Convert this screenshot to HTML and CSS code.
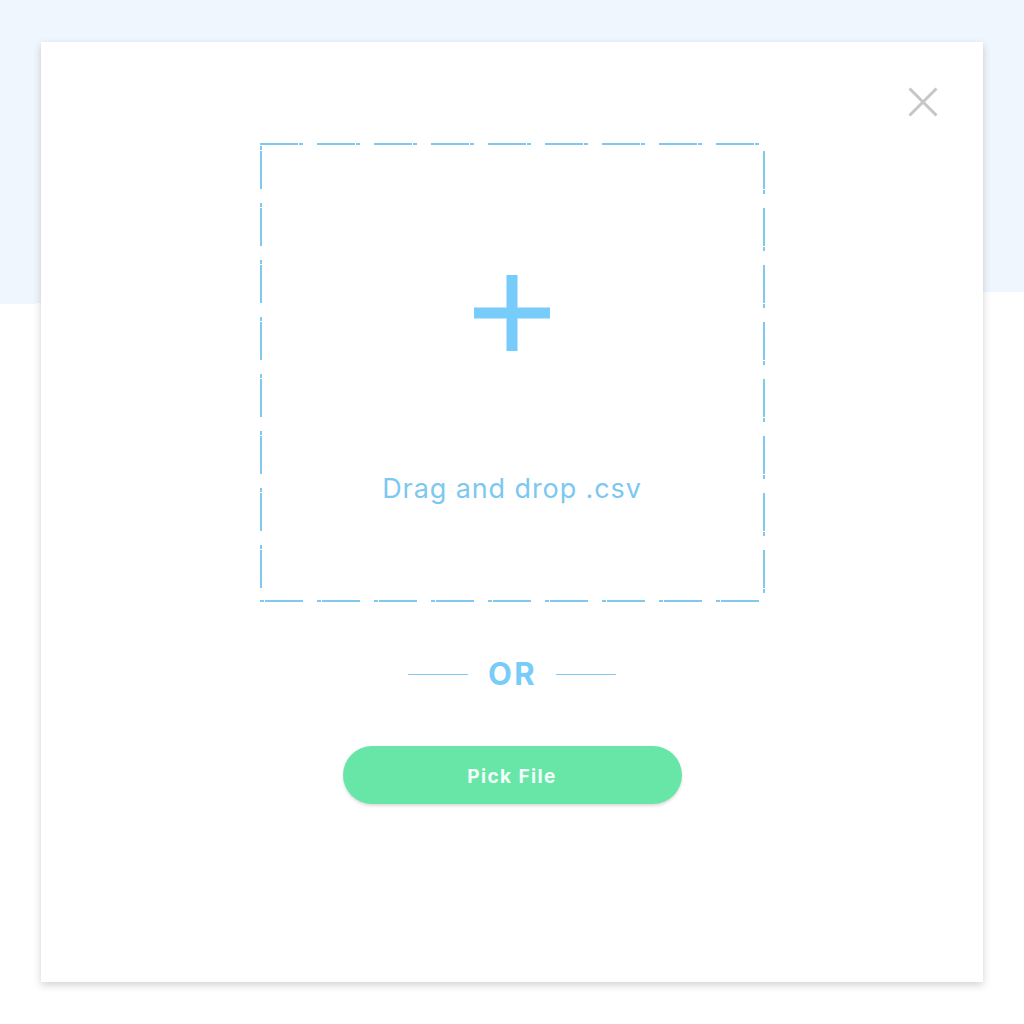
FILE: index.html
```html
<!DOCTYPE html>
<html lang="en">
<head>
<meta charset="utf-8">
<title>Upload CSV</title>
<link rel="stylesheet" href="styles.css">
</head>
<body>
<div class="card">
  <button class="close" aria-label="Close">
    <svg width="30" height="30" viewBox="0 0 30 30"><path d="M1.5 1.5 L28.5 28.5 M28.5 1.5 L1.5 28.5" stroke="#c6c6c6" stroke-width="3" fill="none"/></svg>
  </button>
  <div class="dropzone">
    <svg class="plus" width="76" height="76" viewBox="0 0 76 76"><rect x="32.5" y="0" width="11" height="76" fill="#77ccfa"/><rect x="0" y="32.5" width="76" height="11" fill="#77ccfa"/></svg>
    <div class="drop-text">Drag and drop .csv</div>
  </div>
  <div class="or-row">
    <span class="or-line"></span>
    <span class="or-text">OR</span>
    <span class="or-line"></span>
  </div>
  <button class="pick">Pick File</button>
</div>
</body>
</html>
```

FILE: styles.css
```css
html {
  background: linear-gradient(179.33deg, #f0f6fe 303.9px, #ffffff 303.9px) no-repeat;
  background-color: #fff;
}
body {
  margin: 0;
  padding: 42px 0 42px 41px;
  font-family: Inter, Lato, sans-serif;
}
.card {
  position: relative;
  box-sizing: border-box;
  width: 942px;
  height: 940px;
  background: #fff;
  box-shadow: 0 3px 8px rgba(0, 0, 0, 0.18);
  display: flex;
  flex-direction: column;
  align-items: center;
}
.close {
  position: absolute;
  top: 45px;
  right: 45px;
  width: 30px;
  height: 30px;
  padding: 0;
  border: 0;
  background: none;
  cursor: pointer;
}
.close svg { display: block; }
.dropzone {
  box-sizing: border-box;
  width: 505px;
  height: 459px;
  margin-top: 101px;
  padding-top: 132px;
  display: flex;
  flex-direction: column;
  align-items: center;
  background:
    repeating-linear-gradient(90deg, #80c8ee 0 38px, transparent 38px 39px, #80c8ee 39px 43px, transparent 43px 57px) left top / 100% 2px no-repeat,
    repeating-linear-gradient(90deg, #80c8ee 0 4px, transparent 4px 5px, #80c8ee 5px 43px, transparent 43px 57px) left bottom / 100% 2px no-repeat,
    repeating-linear-gradient(180deg, transparent 0 3px, #80c8ee 3px 7px, transparent 7px 8px, #80c8ee 8px 46px, transparent 46px 57px) left top / 2px 100% no-repeat,
    repeating-linear-gradient(180deg, transparent 0 8px, #80c8ee 8px 46px, transparent 46px 47px, #80c8ee 47px 51px, transparent 51px 57px) right top / 2px 100% no-repeat;
}
.plus { display: block; }
.drop-text {
  margin-top: 122px;
  font-size: 27px;
  line-height: 32px;
  color: #7cc8f0;
  letter-spacing: 0.9px;
}
.or-row {
  margin-top: 53px;
  display: flex;
  align-items: center;
  gap: 20px;
  height: 38px;
}
.or-line {
  width: 60px;
  height: 1px;
  background: #80c8ee;
}
.or-text {
  font-size: 31px;
  line-height: 38px;
  font-weight: 700;
  color: #77ccfa;
  letter-spacing: 2.5px;
  margin-right: -1px;
}
.pick {
  margin-top: 53px;
  width: 339px;
  height: 58px;
  padding: 3px 0 0;
  border: 0;
  border-radius: 29px;
  background: #67e6a7;
  box-shadow: 0 2px 3px rgba(0, 0, 0, 0.14);
  color: #f2fff8;
  font-family: Inter, Lato, sans-serif;
  font-size: 19px;
  font-weight: 700;
  letter-spacing: 1.4px;
  cursor: pointer;
}
```
